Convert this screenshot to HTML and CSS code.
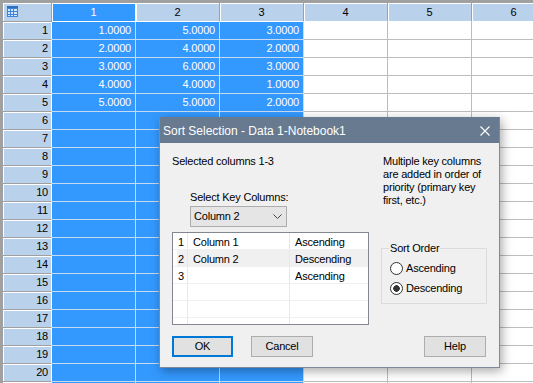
FILE: index.html
```html
<!DOCTYPE html>
<html lang="en">
<head>
	<meta charset="UTF-8">
	<title>Sort Selection</title>
<link rel="stylesheet" href="styles.css">
</head>
<body>
<div class="sheet">
	<span class="hd corner"><svg width="11" height="11" viewBox="0 0 11 11"><rect width="11" height="11" fill="#3b86dc"/><rect width="11" height="2" fill="#2a6fc0"/><g fill="#d3e6fa"><rect x="1" y="3" width="2" height="2"/><rect x="4" y="3" width="2" height="2"/><rect x="7" y="3" width="3" height="2"/><rect x="1" y="6" width="2" height="2"/><rect x="4" y="6" width="2" height="2"/><rect x="7" y="6" width="3" height="2"/><rect x="1" y="9" width="2" height="1"/><rect x="4" y="9" width="2" height="1"/><rect x="7" y="9" width="3" height="1"/></g></svg></span>
	<span class="hd on">1</span><span class="hd">2</span><span class="hd">3</span><span class="hd">4</span><span class="hd">5</span><span class="hd">6</span>

	<span class="rh">1</span><span class="s">1.0000</span><span class="s">5.0000</span><span class="s">3.0000</span><span></span><span></span><span></span>
	<span class="rh">2</span><span class="s">2.0000</span><span class="s">4.0000</span><span class="s">2.0000</span><span></span><span></span><span></span>
	<span class="rh">3</span><span class="s">3.0000</span><span class="s">6.0000</span><span class="s">3.0000</span><span></span><span></span><span></span>
	<span class="rh">4</span><span class="s">4.0000</span><span class="s">4.0000</span><span class="s">1.0000</span><span></span><span></span><span></span>
	<span class="rh">5</span><span class="s">5.0000</span><span class="s">5.0000</span><span class="s">2.0000</span><span></span><span></span><span></span>
	<span class="rh">6</span><span class="s"></span><span class="s"></span><span class="s"></span><span></span><span></span><span></span>
	<span class="rh">7</span><span class="s"></span><span class="s"></span><span class="s"></span><span></span><span></span><span></span>
	<span class="rh">8</span><span class="s"></span><span class="s"></span><span class="s"></span><span></span><span></span><span></span>
	<span class="rh">9</span><span class="s"></span><span class="s"></span><span class="s"></span><span></span><span></span><span></span>
	<span class="rh">10</span><span class="s"></span><span class="s"></span><span class="s"></span><span></span><span></span><span></span>
	<span class="rh">11</span><span class="s"></span><span class="s"></span><span class="s"></span><span></span><span></span><span></span>
	<span class="rh">12</span><span class="s"></span><span class="s"></span><span class="s"></span><span></span><span></span><span></span>
	<span class="rh">13</span><span class="s"></span><span class="s"></span><span class="s"></span><span></span><span></span><span></span>
	<span class="rh">14</span><span class="s"></span><span class="s"></span><span class="s"></span><span></span><span></span><span></span>
	<span class="rh">15</span><span class="s"></span><span class="s"></span><span class="s"></span><span></span><span></span><span></span>
	<span class="rh">16</span><span class="s"></span><span class="s"></span><span class="s"></span><span></span><span></span><span></span>
	<span class="rh">17</span><span class="s"></span><span class="s"></span><span class="s"></span><span></span><span></span><span></span>
	<span class="rh">18</span><span class="s"></span><span class="s"></span><span class="s"></span><span></span><span></span><span></span>
	<span class="rh">19</span><span class="s"></span><span class="s"></span><span class="s"></span><span></span><span></span><span></span>
	<span class="rh">20</span><span class="s"></span><span class="s"></span><span class="s"></span><span></span><span></span><span></span>
	<span class="rh"></span><span class="s"></span><span class="s"></span><span class="s"></span><span></span><span></span><span></span>
</div>

<div class="dlg">
	<div class="title">
		<span>Sort Selection - Data 1-Notebook1</span>
		<svg width="10" height="10" viewBox="0 0 10 10"><path d="M0.5 0.5L9.5 9.5M9.5 0.5L0.5 9.5" stroke="#fff" stroke-width="1.2"/></svg>
	</div>
	<div class="body">
		<div class="left">
			<p class="info">Selected columns 1-3</p>
			<p class="key-label">Select Key Columns:</p>
			<div class="combo">
				<span>Column 2</span>
				<svg width="9" height="5" viewBox="0 0 9 5"><path d="M0.5 0.5L4.5 4.5L8.5 0.5" fill="none" stroke="#444"/></svg>
			</div>
			<div class="list">
				<div class="row"><span class="idx">1</span><span>Column 1</span><span>Ascending</span></div>
				<div class="row cur"><span class="idx">2</span><span>Column 2</span><span>Descending</span></div>
				<div class="row"><span class="idx">3</span><span></span><span>Ascending</span></div>
				<div class="row"><span class="idx"></span><span></span><span></span></div>
				<div class="row"><span class="idx"></span><span></span><span></span></div>
				<div class="row"><span class="idx"></span><span></span><span></span></div>
			</div>
		</div>
		<div class="right">
			<p class="note">Multiple key columns<br>are added in order of<br>priority (primary key<br>first, etc.)</p>
			<fieldset class="order">
				<legend>Sort Order</legend>
				<div class="opt"><span class="radio"></span>Ascending</div>
				<div class="opt"><span class="radio on"></span>Descending</div>
			</fieldset>
		</div>
		<div class="buttons">
			<button class="btn default">OK</button>
			<button class="btn cancel">Cancel</button>
			<button class="btn help">Help</button>
		</div>
	</div>
</div>
</body>
</html>
```
FILE: styles.css
```css
body{margin:0;height:383px;overflow:hidden;position:relative;background:#fff;font-family:"Liberation Sans",Arial,sans-serif;font-size:11px;color:#000;}
p{margin:0;}

/* worksheet */
.sheet{display:grid;grid-template-columns:49px repeat(6,84px);grid-template-rows:19px;grid-auto-rows:18px;width:max-content;border-top:3px solid #a0a0a0;border-left:3px solid #a0a0a0;}
.sheet>span{box-sizing:border-box;line-height:17px;padding-right:4px;text-align:right;white-space:nowrap;overflow:hidden;letter-spacing:-0.2px;border-right:1px solid #bdbdbd;border-bottom:1px solid #bdbdbd;}
.sheet .hd{background:#b9d1ea;text-align:center;padding:0;line-height:18px;border-right-color:#a0a0a0;border-bottom-color:#fff;box-shadow:inset 1px 1px 0 #fff;}
.sheet .hd.on{background:#3399ff;color:#fff;border-right-color:#fff;}
.sheet .corner{text-align:left;padding:3px 0 0 4px;line-height:0;border-bottom-color:#a0a0a0;}
.sheet .rh{background:#b9d1ea;padding-right:3px;border-right-color:#fff;border-bottom-color:#a0a0a0;box-shadow:inset 1px 1px 0 #fff;}
.sheet .s{background:#3399ff;color:#fff;border-color:#c6dbf0;}

/* dialog */
.dlg{position:absolute;left:159px;top:117px;width:341px;height:251px;box-sizing:border-box;border:1px solid #7d8a9b;border-top-color:#687a8f;background:#f0f0f0;box-shadow:2px 3px 10px rgba(0,0,0,0.35);}
.title{height:25px;background:#687a8f;color:#fff;font-size:12px;display:flex;align-items:center;justify-content:space-between;padding:0 9px 0 3px;}
.body{display:grid;grid-template-columns:197px 106px;column-gap:12px;padding:12px 12px 0;line-height:13px;letter-spacing:-0.2px;}
.left{display:flex;flex-direction:column;align-items:flex-start;}
.key-label{margin:23px 0 0 18px;}
.combo{margin:2px 0 0 18px;width:97px;height:21px;box-sizing:border-box;border:1px solid #adadad;background:#e5e5e5;display:flex;align-items:center;justify-content:space-between;padding:0 4px 0 3px;}
.list{margin-top:5px;width:197px;height:93px;box-sizing:border-box;border:1px solid #828790;background:#fff;overflow:hidden;}
.list .row{display:grid;grid-template-columns:15px 102px 1fr;height:17px;}
.list .row span{box-sizing:border-box;padding:2px 0 0 5px;line-height:14px;border-bottom:1px solid #f0f0f0;border-right:1px solid #e8e8e8;white-space:nowrap;}
.list .row span:last-child{border-right:none;}
.list .row .idx{padding:2px 3px 0 0;text-align:right;}
.list .cur span{background:#f0f0f0;}
.list .cur .idx{background:linear-gradient(90deg,#fff 4px,#f0f0f0 4px);}
.note{margin-left:2px;}
.order{margin:35px 0 0;width:106px;box-sizing:border-box;min-inline-size:0;padding:3px 0 5px 7px;border:1px solid #dcdcdc;}
.order legend{padding:0 1px;line-height:13px;}
.opt{display:flex;align-items:center;height:20px;}
.radio{width:13px;height:13px;box-sizing:border-box;margin:0 3px 0 1px;border:1px solid #333;border-radius:50%;background:#fff;}
.radio.on{background:radial-gradient(circle,#333 0,#333 3px,#fff 3.6px);}
.buttons{grid-column:1 / -1;display:flex;margin-top:11px;}
.btn{height:21px;width:62px;box-sizing:border-box;padding:0;font:inherit;letter-spacing:inherit;color:#000;background:#e1e1e1;border:1px solid #adadad;}
.btn.default{width:61px;border:2px solid #0078d7;}
.btn.cancel{margin-left:18px;}
.btn.help{margin-left:auto;margin-right:1px;}
```
